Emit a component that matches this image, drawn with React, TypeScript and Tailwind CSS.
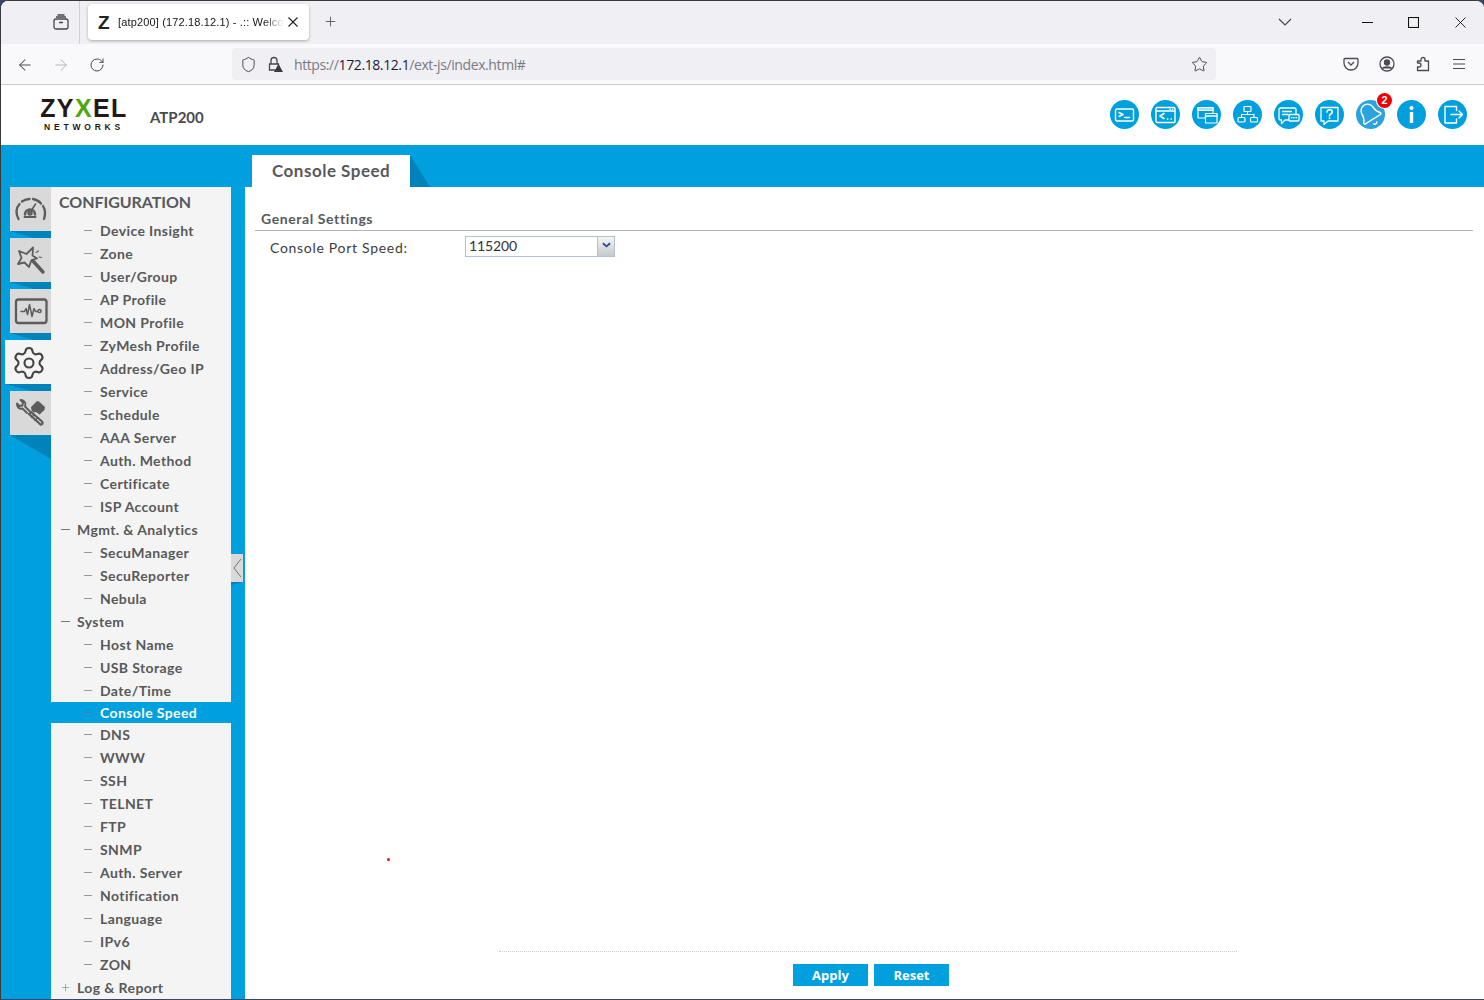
import React from "react";
import { ArrowLeft, ArrowRight, RotateCw, Shield, Star, Plus, Settings } from "lucide-react";

type Row = { t: string; lvl?: 0 | 1; plus?: boolean; active?: boolean; h?: string };

const rows: Row[] = [
  { t: "Device Insight" }, { t: "Zone" }, { t: "User/Group" }, { t: "AP Profile" }, { t: "MON Profile" },
  { t: "ZyMesh Profile" }, { t: "Address/Geo IP" }, { t: "Service" }, { t: "Schedule" }, { t: "AAA Server" },
  { t: "Auth. Method" }, { t: "Certificate" }, { t: "ISP Account" }, { t: "Mgmt. & Analytics", lvl: 0 },
  { t: "SecuManager" }, { t: "SecuReporter" }, { t: "Nebula" }, { t: "System", lvl: 0 }, { t: "Host Name" },
  { t: "USB Storage" }, { t: "Date/Time" }, { t: "Console Speed", active: true, h: "h-[21px]" },
  { t: "DNS" }, { t: "WWW" }, { t: "SSH" }, { t: "TELNET" }, { t: "FTP" }, { t: "SNMP" }, { t: "Auth. Server" },
  { t: "Notification" }, { t: "Language" }, { t: "IPv6" }, { t: "ZON" }, { t: "Log & Report", lvl: 0, plus: true },
];

const S = { fill: "none", stroke: "currentColor", strokeWidth: 1.4, strokeLinecap: "round", strokeLinejoin: "round" } as const;

const headIcons: React.ReactNode[] = [
  <g {...S}><rect x="5.500" y="9" width="18" height="12" rx="1.500" /><path d="M9 12.500l4 2-4 2M14.500 17.500h5" strokeWidth="1.500" /></g>,
  <g {...S}><rect x="5" y="7.500" width="19" height="15" rx="1" /><path d="M5 11h19" /><path d="M13 13.500l-4 2.500 4 2.500" strokeWidth="1.600" /><path d="M16.500 19h.4M20 19h.4M19 9.300h.2M21.500 9.300h.2" /></g>,
  <g {...S} strokeWidth="1.200"><path d="M6 7.500h15v10.500H6z" /><path d="M6 7.500h15v3H6z" fill="#9fdcf5" /><rect x="13.500" y="13.500" width="11.500" height="9.500" fill="#00a0df" /><path d="M13.500 16h11.500" strokeWidth="1.500" /></g>,
  <g {...S} strokeWidth="1.200"><rect x="11" y="6.500" width="7" height="5" rx="0.500" /><rect x="5" y="17.500" width="7" height="4.500" rx="1" /><rect x="17.500" y="17.500" width="7" height="4.500" rx="1" /><path d="M14.500 11.500V14.500M8.500 17.500v-3h12.500v3" /></g>,
  <g {...S} strokeWidth="1.300"><path d="M6.500 8h14a1.500 1.500 0 011.500 1.500v9a1.500 1.500 0 01-1.500 1.500H11l-3.500 3.500V20h-1A1.500 1.500 0 015 18.500v-9A1.500 1.500 0 016.500 8z" /><path d="M8.500 11.500h9M8.500 14.500h5.500" /><rect x="15" y="14.500" width="10" height="6.500" rx="1" fill="#00a0df" /><path d="M17.500 17.700h.3M19.800 17.700h.3M22.100 17.700h.3" strokeWidth="1.500" /></g>,
  <g {...S} strokeWidth="1.300"><path d="M6 7.500h17v13.500h-10l-4 3.500v-3.500H6z" /><path d="M12 12c.3-3 5.500-3 5.300.2-.1 1.800-2.800 1.900-2.800 3.600" strokeWidth="1.700" /><path d="M14.500 18.300h.01" strokeWidth="1.900" /></g>,
  <g {...S} strokeWidth="1.300" transform="translate(14 14.500) rotate(-32) scale(1.1) translate(-12 -12)"><path d="M10.268 21a2 2 0 0 0 3.464 0" /><path d="M3.262 15.326A1 1 0 0 0 4 17h16a1 1 0 0 0 .74-1.673C19.410 13.956 18 12.499 18 8A6 6 0 0 0 6 8c0 4.499-1.411 5.956-2.738 7.326" /></g>,
  <g fill="currentColor"><circle cx="14.500" cy="8" r="2" /><path d="M12.800 12h3.400v11h-3.400z" /></g>,
  <g {...S}><path d="M18.500 10.500V6.500H7V23h11.500v-4" /><path d="M13 14.500h11.500M21 11l3.500 3.500-3.500 3.500" /></g>,
];

function HeadIcon({ i, children }: { i: number; children?: React.ReactNode }) {
  return (
    <div className={`relative flex h-[29px] w-[29px] shrink-0 items-center justify-center rounded-full text-white ${i === 6 ? "bg-[#2ba3de]" : "bg-[#00a0df]"}`}>
      <svg viewBox="0 0 29 29" className="h-[29px] w-[29px] overflow-visible">{headIcons[i]}</svg>
      {children}
    </div>
  );
}

const railIcons: React.ReactNode[] = [
  <g fill="none" stroke="#5c5c5c" strokeWidth="2.300" strokeLinecap="round">
    <path d="M8.500 32C6 27 6 21 9.500 17M12 14.500C14.500 12.800 17 12 19.500 12M23 12C26 12.500 29 14 31 16.500M33 19C35.500 23 35.500 27.500 34 32" />
    <path d="M15 27.500a5 5 0 1 1 10 0" strokeWidth="2.600" />
    <circle cx="20" cy="26" r="1.600" />
    <path d="M20.500 25L25.500 17" strokeWidth="1.600" />
    <path d="M14.500 30h11" strokeWidth="2" />
  </g>,
  <g fill="none" stroke="#5c5c5c" strokeLinejoin="round" strokeLinecap="round">
    <path d="M9 13L16.500 16L23 9.500L22.500 17.500L27 20.500L21.500 22L19 29L14.500 24.500L8 26L11.500 20z" strokeWidth="1.800" fill="#d9d9d9" />
    <path d="M23 23L33 34" strokeWidth="3.400" />
    <path d="M26 14.500l2.500-1.500M29 19l2.500.5" strokeWidth="1.200" />
  </g>,
  <g fill="none" stroke="#5c5c5c" strokeLinejoin="round" strokeLinecap="round">
    <rect x="6" y="10.500" width="30.500" height="23.500" rx="2.500" strokeWidth="2.300" />
    <path d="M11 22.500h3.500l1.500-3 1.500 6 2-10 2.500 12 2-8 1.500 3h1.500" strokeWidth="1.500" />
    <circle cx="29.500" cy="22" r="1.600" strokeWidth="1.500" />
  </g>,
  null,
  <g strokeLinecap="round" strokeLinejoin="round">
    <path d="M19.500 20l-4.500-4.500c1.500-3-.5-6.500-4-6.500l-.5 0 2.500 2.500-.5 3-3 .5-2.500-2.500c-.5 3.500 2.500 6 5.500 5l4.500 4.500" fill="none" stroke="#5c5c5c" strokeWidth="1.900" />
    <path d="M21 16l6-6 2 .5 6 5.500-.5 3-5 4.500-3.500-2.500-2.500.5-2-2z" fill="#5c5c5c" />
    <path d="M19 23l2-2 11 9.500c1.500 1.500 0 3.500-1.500 3z" fill="none" stroke="#5c5c5c" strokeWidth="2.300" />
    <path d="M21.500 26.500l3-3M25 29.500l3-3" stroke="#5c5c5c" strokeWidth="1.300" />
  </g>,
];

function Rail({ i, active, last }: { i: number; active?: boolean; last?: boolean }) {
  return (
    <div className="flex flex-col items-end">
      {active ? (
        <div className="flex h-[44px] w-[46px] items-center justify-center bg-[#f4f4f4] pl-[2px] pt-[1px]">
          <Settings size={36} strokeWidth={1.4} className="text-[#444]" />
        </div>
      ) : (
        <div className="h-[44px] w-[41px] bg-[#d9d9d9]">
          <svg viewBox="0 0 41 44" className="h-[44px] w-[41px]">{railIcons[i]}</svg>
        </div>
      )}
      {last ? (
        <svg viewBox="0 0 41 24" className="h-[24px] w-[41px]"><polygon points="0,0 41,0 41,24" fill="#0082bb" /></svg>
      ) : (
        <svg viewBox="0 0 41 7" className={`h-[7px] ${active ? "w-[46px]" : "w-[41px]"}`} preserveAspectRatio="none"><polygon points="0,0 41,0 41,7 24,7" fill="#0082bb" /></svg>
      )}
    </div>
  );
}

function SideRow({ r }: { r: Row }) {
  const h = r.h ?? "h-[23px]";
  const bg = r.active ? "bg-[#00a0df] text-white" : "text-[#58595b]";
  if (r.lvl === 0) {
    return (
      <div className={`flex ${h} items-center ${bg}`}>
        <span className="ml-[9px] flex w-[17px] items-center text-[#666]">
          {r.plus ? <Plus size={11} strokeWidth={1.1} /> : <span className="ml-px h-px w-[9px] bg-[#777]" />}
        </span>
        <span className="text-[14px] font-bold tracking-[0.4px]">{r.t}</span>
      </div>
    );
  }
  return (
    <div className={`flex ${h} items-center ${bg}`}>
      <span className={`ml-[33px] mr-[8px] h-px w-[8px] ${r.active ? "bg-[#4a7f9a]" : "bg-[#999]"}`} />
      <span className="text-[14px] font-bold tracking-[0.4px]">{r.t}</span>
    </div>
  );
}

export default function App() {
  return (
    <div className="h-[1000px] w-[1484px] overflow-hidden bg-[#39456b] pb-px font-['Lato',sans-serif]">
      <div className="flex h-[999px] flex-col overflow-hidden rounded-t-lg border-l border-t border-l-[#3a3a3a] border-t-[#3a3a3a] bg-white">
        {/* tab bar */}
        <div className="flex h-[43px] shrink-0 items-start bg-[#f0f0f4] text-[#45454d]">
          <div className="flex h-full w-[79px] items-center justify-end border-r border-[#cfcfd8] pr-[10px]">
            <svg viewBox="0 0 16 16" className="mb-[1px] h-[16px] w-[16px]" fill="none" stroke="#45454d" strokeWidth="1.300"><rect x="1" y="5" width="14" height="10" rx="2" /><path d="M3 3h10M4.500 1h7M6 8.500h4" /></svg>
          </div>
          <div className="ml-[8px] mt-[3px] flex h-[36px] w-[221px] items-center rounded bg-white pl-[10px] shadow-[0_1px_3px_rgba(0,0,0,0.3)]">
            <span className="w-[20px] text-[19px] font-bold leading-none text-[#222] font-['Liberation_Sans',sans-serif]">Z</span>
            <span className="w-[166px] overflow-hidden whitespace-nowrap text-[11px] tracking-[0.15px] text-[#15141a] font-['Liberation_Sans',sans-serif] [mask-image:linear-gradient(to_right,black_88%,transparent)]">[atp200] (172.18.12.1) - .:: Welco</span>
            <svg viewBox="0 0 10 10" className="ml-[4px] h-[10px] w-[10px]" fill="none" stroke="#222" strokeWidth="1.100"><path d="M0.500 0.500l9 9M9.500 0.500l-9 9" /></svg>
          </div>
          <div className="ml-[14px] mt-[13px]"><Plus size={15} strokeWidth={1.3} /></div>
          <div className="flex-1" />
          <svg viewBox="0 0 14 8" className="mr-[70px] mt-[17px] h-[8px] w-[14px]" fill="none" stroke="#45454d" strokeWidth="1.200"><path d="M1 1l6 6 6-6" /></svg>
          <svg viewBox="0 0 11 11" className="mr-[35px] mt-[16px] h-[11px] w-[11px]" fill="none" stroke="#111" strokeWidth="1"><path d="M0 5.500h11" /></svg>
          <svg viewBox="0 0 11 11" className="mr-[36px] mt-[16px] h-[11px] w-[11px]" fill="none" stroke="#111" strokeWidth="1.100"><rect x="0.500" y="0.500" width="10" height="10" /></svg>
          <svg viewBox="0 0 11 11" className="mr-[18px] mt-[16px] h-[11px] w-[11px]" fill="none" stroke="#111" strokeWidth="0.900"><path d="M0.500 0.500l10 10M10.500 0.500l-10 10" /></svg>
        </div>
        {/* toolbar */}
        <div className="flex h-[41px] shrink-0 items-center border-b border-[#ccc] bg-[#f9f9fb] text-[#4a4a52]">
          <ArrowLeft size={18} strokeWidth={1.4} className="ml-[15px] mt-px" />
          <ArrowRight size={18} strokeWidth={1.3} className="ml-[18px] mt-px text-[#b3b3b8]" />
          <RotateCw size={16} strokeWidth={1.5} className="ml-[19px] mt-px" />
          <div className="ml-[127px] flex h-[32px] w-[984px] items-center rounded bg-[#f0f0f4] pl-[8px] pr-[8px]">
            <Shield size={17} strokeWidth={1.4} />
            <span className="relative ml-[10px] flex h-[16px] w-[16px] items-center justify-center">
              <svg viewBox="0 0 16 16" className="h-[16px] w-[16px]"><path d="M4 8V4.500a3 3 0 016 0V8M2.500 8h9v6h-9z" fill="none" stroke="#45454d" strokeWidth="1.300" /><path d="M11.500 8l4.500 8H7z" fill="#3a3a42" /></svg>
            </span>
            <span className="ml-[11px] text-[14px] font-['Open_Sans',sans-serif] tracking-[-0.4px] text-[#7a7a84]">https://<span className="text-[#1d1b3a]">172.18.12.1</span>/ext-js/index.html#</span>
            <div className="flex-1" />
            <Star size={17} strokeWidth={1.4} />
          </div>
          <div className="ml-[127px] flex items-center text-[#4a4a52]">
            <svg viewBox="0 0 16 16" className="h-[16px] w-[16px]" fill="none" stroke="currentColor" strokeWidth="1.300"><path d="M2 2.500h12a1 1 0 011 1V7a7 7 0 01-14 0V3.500a1 1 0 011-1z" /><path d="M5 6l3 3 3-3" /></svg>
            <svg viewBox="0 0 16 16" className="ml-[20px] h-[16px] w-[16px]" fill="none" stroke="currentColor" strokeWidth="1.300"><circle cx="8" cy="8" r="7" /><circle cx="8" cy="6.500" r="2.500" fill="currentColor" /><path d="M3.500 12.500c1-2 8-2 9 0" fill="currentColor" /></svg>
            <svg viewBox="0 0 16 16" className="ml-[20px] h-[16px] w-[16px]" fill="none" stroke="currentColor" strokeWidth="1.300" strokeLinejoin="round"><path d="M3 5h3V3.500a2 2 0 014 0V5h3.500v9.500H2.500V11H4a2 2 0 000-4H2.500V5z" /></svg>
            <svg viewBox="0 0 14 12" className="ml-[21px] h-[12px] w-[14px]" fill="none" stroke="currentColor" strokeWidth="1.200"><path d="M1 1.500h12M1 6h12M1 10.500h12" /></svg>
          </div>
          <div className="w-[17px]" />
        </div>
        {/* app header */}
        <div className="flex h-[60px] shrink-0 items-center bg-white">
          <div className="ml-[38px] flex w-[90px] flex-col items-center">
            <span className="-mt-[2px] whitespace-nowrap text-[25px] font-bold leading-[22px] tracking-[1.4px] text-[#231815] font-['Liberation_Sans',sans-serif]">ZY<span className="text-[#4fa80c]">X</span>EL</span>
            <span className="mt-[3px] whitespace-nowrap text-[8.5px] font-bold leading-[10px] tracking-[3.8px] text-[#231815] font-['Liberation_Sans',sans-serif]">NETWORKS</span>
          </div>
          <span className="ml-[21px] mt-[5px] text-[15px] font-bold text-[#4a4a4a]">ATP200</span>
          <div className="flex-1" />
          <div className="mb-[1px] mr-[17px] flex items-center gap-[12px]">
            {headIcons.map((_, i) => (
              <HeadIcon key={i} i={i}>
                {i === 6 && (
                  <span className="absolute -right-[7px] -top-[7px] flex h-[15px] w-[15px] items-center justify-center rounded-full bg-[#ee0000] text-[11px] font-bold leading-none text-white ring-1 ring-white font-['Liberation_Sans',sans-serif]">2</span>
                )}
              </HeadIcon>
            ))}
          </div>
        </div>
        {/* blue body */}
        <div className="flex min-h-0 flex-1 flex-col bg-[#00a0df]">
          <div className="flex h-[42px] shrink-0 items-end pl-[251px]">
            <div className="flex h-[32px] w-[158px] items-center bg-white pl-[20px] text-[17px] font-bold tracking-[0.5px] text-[#58595b]">Console Speed</div>
            <svg viewBox="0 0 20 32" className="h-[32px] w-[20px]"><polygon points="0,0 20,32 0,32" fill="#0082bb" /></svg>
          </div>
          <div className="flex min-h-0 flex-1">
            <div className="flex w-[50px] shrink-0 flex-col">
              <Rail i={0} />
              <Rail i={1} />
              <Rail i={2} />
              <Rail i={3} active />
              <Rail i={4} last />
            </div>
            <div className="w-[180px] shrink-0 bg-[#f4f4f4]">
              <div className="flex h-[32px] items-center pb-[2px] pl-[8px] text-[16px] font-bold tracking-[-0.05px] text-[#58595b]">CONFIGURATION</div>
              {rows.map((r) => <SideRow key={r.t} r={r} />)}
            </div>
            <div className="w-[14px] shrink-0 pt-[367px]">
              <div className="flex h-[28px] w-[12px] items-center justify-center bg-[#d9d9d9]">
                <svg viewBox="0 0 9 20" className="h-[20px] w-[9px]" fill="none" stroke="#666" strokeWidth="0.900"><path d="M8 1L1 10l7 9" /></svg>
              </div>
              <svg viewBox="0 0 12 3" className="h-[3px] w-[12px]"><polygon points="0,3 12,0 0,0" fill="#0082bb" /></svg>
            </div>
            {/* content */}
            <div className="relative flex min-w-0 flex-1 flex-col bg-white text-[#3c3c3c]">
              <div className="ml-[10px] mr-[11px] mt-[23px] border-b border-[#b5b5b5] pb-[2px] pl-[6px] text-[14px] font-bold leading-[18px] tracking-[0.6px] text-[#58595b]">General Settings</div>
              <div className="mt-[3px] flex items-center pl-[25px]">
                <span className="mt-[3px] w-[195px] text-[14px] tracking-[0.7px] text-[#3c3c3c]">Console Port Speed:</span>
                <div className="flex h-[21px] w-[150px] items-stretch border border-[#b3c0d4]">
                  <span className="flex-1 pl-[3px] text-[14px] leading-[18px] tracking-[-0.1px] text-[#333]">115200</span>
                  <span className="flex w-[17px] items-center justify-center border-l border-[#b3c0d4] bg-gradient-to-b from-[#f5f5f5] to-[#c4c8cc]">
                    <svg viewBox="0 0 10 6" className="mb-[3px] h-[6px] w-[9px]" fill="none" stroke="#2a4a8c" strokeWidth="2"><path d="M1 1l4 3.500L9 1" /></svg>
                  </span>
                </div>
              </div>
              <span className="absolute left-[142px] top-[671px] h-[3px] w-[3px] rounded-full bg-[#e01010]" />
              <div className="flex-1" />
              <div className="ml-[254px] w-[738px] border-t border-dotted border-[#cfcfcf]" />
              <div className="mb-[13px] ml-[548px] mt-[12px] flex gap-[6px]">
                <button className="h-[22px] w-[75px] bg-[#00a0df] pt-px text-[13px] font-bold text-white font-['Open_Sans',sans-serif]">Apply</button>
                <button className="h-[22px] w-[75px] bg-[#00a0df] pt-px text-[13px] font-bold text-white font-['Open_Sans',sans-serif]">Reset</button>
              </div>
            </div>
          </div>
        </div>
      </div>
    </div>
  );
}
